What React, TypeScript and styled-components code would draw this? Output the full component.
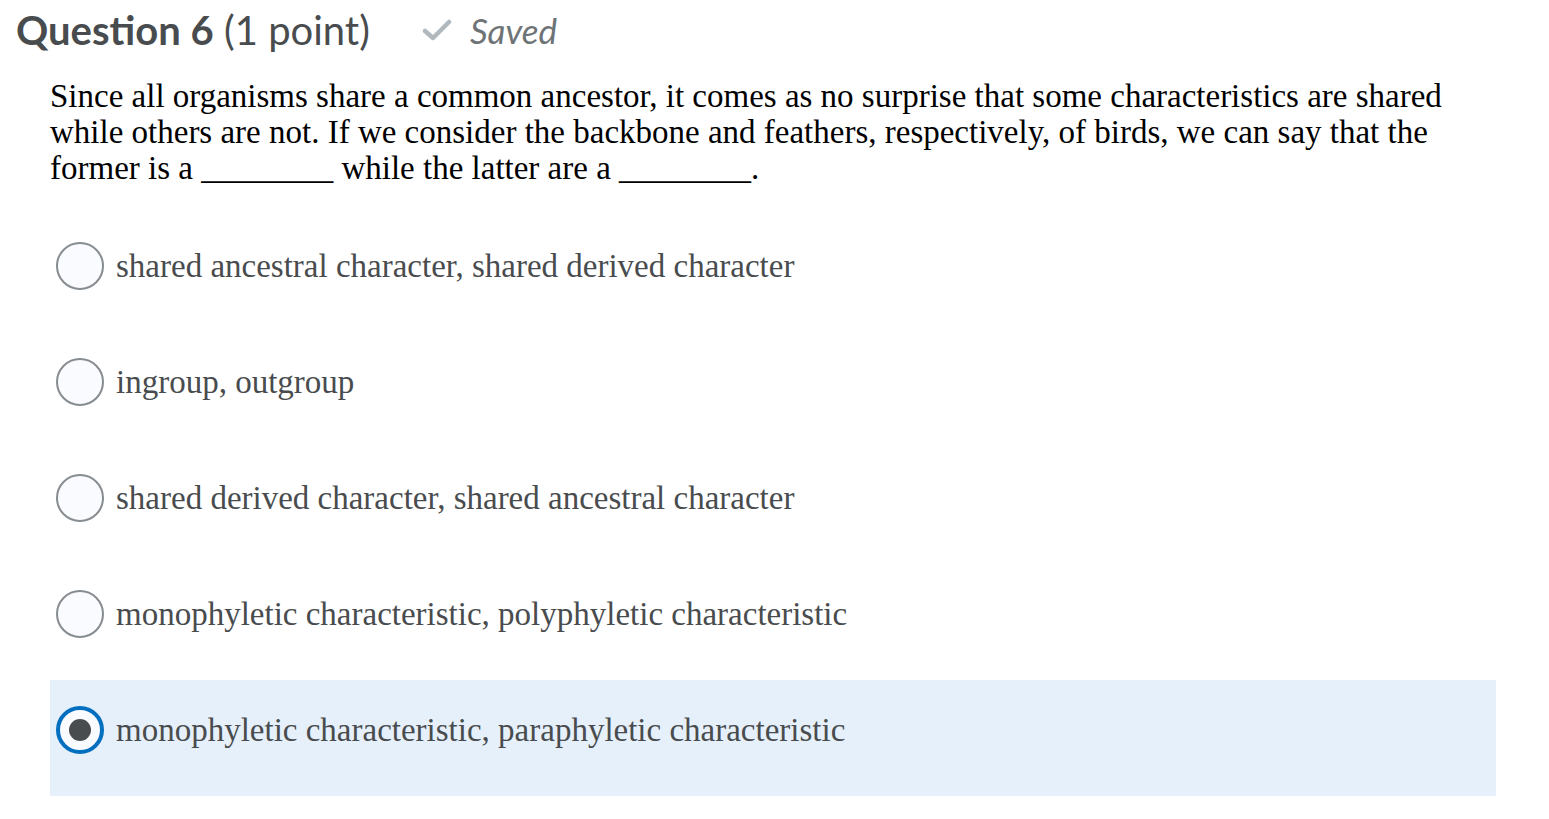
import styled, { createGlobalStyle } from 'styled-components'

const GlobalStyle = createGlobalStyle`
  body {
    margin: 0;
    background: #ffffff;
  }
`

const Page = styled.div`
  padding: 6px 0 0 16px;
  width: 1549px;
  box-sizing: border-box;
`

const HeaderRow = styled.div`
  display: flex;
  align-items: center;
  gap: 52px;
  height: 48px;
`

const Heading = styled.h2`
  margin: 0;
  font-family: Lato, 'Noto Sans', sans-serif;
  font-size: 40px;
  font-weight: 400;
  color: #494c4e;
`

const Bold = styled.span`
  font-weight: 700;
`

const SavedTag = styled.span`
  display: flex;
  align-items: center;
  gap: 18px;
  font-family: Lato, 'Noto Sans', sans-serif;
  font-style: italic;
  font-size: 35px;
  color: #6e7376;
`

const Body = styled.div`
  padding: 24px 53px 0 34px;
`

const Prompt = styled.p`
  margin: 0;
  max-width: 1400px;
  font-family: 'Liberation Serif', 'Times New Roman', serif;
  font-size: 33px;
  line-height: 36px;
  color: #000000;
`

const Options = styled.div`
  display: flex;
  flex-direction: column;
  margin-top: 30px;
`

const OptionRow = styled.label<{ selected?: boolean }>`
  display: flex;
  align-items: flex-start;
  gap: 12px;
  height: 116px;
  box-sizing: border-box;
  padding: 26px 0 0 6px;
  background: ${({ selected }) => (selected ? '#e6f0fb' : 'transparent')};
`

const Radio = styled.span<{ selected?: boolean }>`
  flex: none;
  width: 48px;
  height: 48px;
  border-radius: 50%;
  box-sizing: border-box;
  background: #f9fbff;
  border: ${({ selected }) =>
    selected ? '4px solid #006fbf' : '2px solid #868c8f'};
  display: flex;
  align-items: center;
  justify-content: center;
`

const Dot = styled.span`
  width: 22px;
  height: 22px;
  border-radius: 50%;
  background: #494c4e;
`

const OptionText = styled.span`
  font-family: 'Liberation Serif', 'Times New Roman', serif;
  font-size: 33px;
  line-height: 48px;
  color: #494c4e;
`

const CheckIcon = () => (
  <svg width="30" height="24" viewBox="0 0 30 24">
    <path
      d="M3 13 L11 20 L27 4"
      fill="none"
      stroke="#b1b9be"
      strokeWidth="4.5"
      strokeLinecap="round"
      strokeLinejoin="round"
    />
  </svg>
)

const options = [
  'shared ancestral character, shared derived character',
  'ingroup, outgroup',
  'shared derived character, shared ancestral character',
  'monophyletic characteristic, polyphyletic characteristic',
  'monophyletic characteristic, paraphyletic characteristic',
]

const App = () => {
  const selected = 4
  return (
    <Page>
      <GlobalStyle />
      <HeaderRow>
        <Heading>
          <Bold>Question 6</Bold> (1 point)
        </Heading>
        <SavedTag>
          <CheckIcon />
          Saved
        </SavedTag>
      </HeaderRow>
      <Body>
        <Prompt>
          Since all organisms share a common ancestor, it comes as no surprise
          that some characteristics are shared while others are not. If we
          consider the backbone and feathers, respectively, of birds, we can say
          that the former is a ________ while the latter are a ________.
        </Prompt>
        <Options>
          {options.map((text, i) => (
            <OptionRow key={text} selected={i === selected}>
              <Radio selected={i === selected}>{i === selected && <Dot />}</Radio>
              <OptionText>{text}</OptionText>
            </OptionRow>
          ))}
        </Options>
      </Body>
    </Page>
  )
}

export default App
